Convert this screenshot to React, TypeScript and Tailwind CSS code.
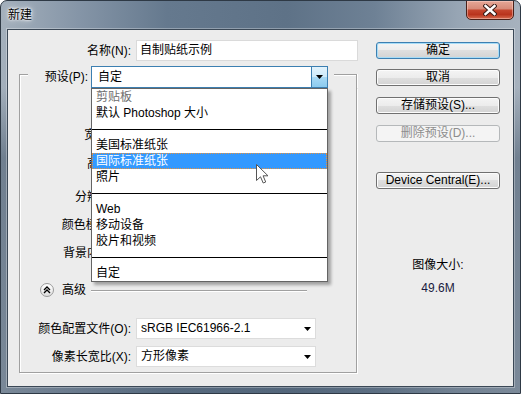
import React from 'react';

function Caret() {
  return (
    <svg width="7" height="4" viewBox="0 0 7 4" className="block">
      <path d="M0 0H7L3.5 4Z" fill="#000" />
    </svg>
  );
}

function Btn({ label, variant }: { label: string; variant?: 'default' | 'disabled' }) {
  if (variant === 'default') {
    return (
      <div className="h-[17px] w-[124px] rounded-[3px] border border-[#3c7fb1] bg-[linear-gradient(#f4f4f4_0%,#ececec_50%,#dfdfdf_50%,#d3d3d3_100%)] shadow-[inset_0_0_0_1px_#a6dcf7] text-center text-[12px] leading-[15px] text-black">
        {label}
      </div>
    );
  }
  if (variant === 'disabled') {
    return (
      <div className="h-[17px] w-[124px] rounded-[3px] border border-[#b5b8ba] bg-[#f4f4f4] text-center text-[12px] leading-[15px] text-[#8d8d8d]">
        {label}
      </div>
    );
  }
  return (
    <div className="h-[17px] w-[124px] rounded-[3px] border border-[#707070] bg-[linear-gradient(#f4f4f4_0%,#ececec_50%,#dfdfdf_50%,#d3d3d3_100%)] shadow-[inset_0_0_0_1px_#fcfcfc] text-center text-[12px] leading-[15px] text-black">
      {label}
    </div>
  );
}

function FlatSelect({ value, width }: { value: string; width: string }) {
  return (
    <div className={`${width} h-[21px] ml-[5px] border border-[#dcdcdc] bg-white flex items-center pl-[4px] pr-[4px]`}>
      <div className="flex-1 text-[12px] leading-[19px] text-black">{value}</div>
      <Caret />
    </div>
  );
}

function HiddenRow({ label, mt, gray, children }: { label: string; mt: string; gray?: boolean; children?: React.ReactNode }) {
  return (
    <div className={`${mt} h-[20px] flex items-center`}>
      <div className={`w-[111px] text-right text-[12px] leading-[16px] ${gray ? 'text-[#a3a3a3]' : 'text-black'}`}>{label}</div>
      {children}
    </div>
  );
}

type Item = { t?: string; sep?: boolean; gray?: boolean; hl?: boolean };
const items: Item[] = [
  { t: '剪贴板', gray: true },
  { t: '默认 Photoshop 大小' },
  { sep: true },
  { t: '美国标准纸张' },
  { t: '国际标准纸张', hl: true },
  { t: '照片' },
  { sep: true },
  { t: 'Web' },
  { t: '移动设备' },
  { t: '胶片和视频' },
  { sep: true },
  { t: '自定' },
];

export default function App() {
  return (
    <div className="w-[521px] h-[394px] [font-family:'Liberation_Sans','Noto_Sans_CJK_SC',sans-serif]">
      <div className="w-[521px] h-[394px] rounded-t-[7px] border border-[#2e3945] bg-[linear-gradient(180deg,rgba(70,88,108,0)_0%,rgba(70,88,108,0)_22%,rgba(70,88,108,0.55)_40%,rgba(70,88,108,0.45)_100%),linear-gradient(90deg,#a4b0bc_0%,#8595a7_15%,#65798e_32%,#5e7287_55%,#6e8195_72%,#97a5b4_88%,#a7b2be_100%)] flex flex-col overflow-hidden">
        {/* Title bar */}
        <div className="h-[28px] flex items-start justify-between">
          <div className="ml-[7px] mt-[6px] text-[12px] leading-[16px] text-black [text-shadow:0_0_6px_#fff,0_0_3px_#fff,0_0_2px_#fff]">新建</div>
          <div className="mr-[6px] -mt-px w-[48px] h-[20px] rounded-b-[5px] border border-[#4a2119] bg-[linear-gradient(#e6a797_0%,#d88b79_42%,#c4452d_52%,#b9341d_75%,#d66c50_100%)] shadow-[inset_0_0_0_1px_rgba(255,220,210,0.45)] flex items-center justify-center">
            <svg width="14" height="12" viewBox="0 0 14 12">
              <path d="M2.5 2L11.5 10M11.5 2L2.5 10" stroke="#3a1d18" strokeWidth="4.4" strokeLinecap="square" />
              <path d="M2.5 2L11.5 10M11.5 2L2.5 10" stroke="#fff" strokeWidth="2.4" strokeLinecap="square" />
            </svg>
          </div>
        </div>

        {/* Client area */}
        <div className="ml-[6px] w-[507px] h-[358px] border border-[#3b4856] bg-[#ececec] shadow-[0_0_0_1px_rgba(255,255,255,0.3)] flex">
          {/* Left column */}
          <div className="w-[352px] flex flex-col">
            <div className="mt-[10px] h-[21px] flex items-center">
              <div className="w-[123px] text-right text-[12px] leading-[16px] text-black">名称(N):</div>
              <div className="ml-[5px] w-[222px] h-[21px] border border-[#dadada] bg-white pl-[3px] text-[12px] leading-[19px] text-black">自制贴纸示例</div>
            </div>

            {/* Group box */}
            <div className="mt-[5px] ml-[11px] w-[338px] flex flex-col">
              <div className="h-[22px] flex">
                <div className="w-[9px] h-[14px] mt-[8px] border-l border-t border-[#a0a0a0] shadow-[inset_1px_1px_0_#fff]" />
                <div className="w-[63px] pr-[3px] text-right text-[12px] leading-[22px] text-black">预设(P):</div>
                <div className="relative w-[237px] h-[22px] border border-[#3c7fb1] bg-white flex">
                  <div className="flex-1 pl-[6px] text-[12px] leading-[20px] text-black">自定</div>
                  <div className="w-[16px] h-full border-l border-[#3c7fb1] bg-[linear-gradient(#e3f3fc_0%,#cdeafa_50%,#a9daf5_50%,#8ccbee_100%)] flex items-center justify-center">
                    <Caret />
                  </div>
                  {/* Dropdown list */}
                  <div className="absolute left-[-1px] top-[21px] z-10 w-[237px] border border-[#646464] bg-white shadow-[3px_3px_3px_rgba(0,0,0,0.32)]">
                    {items.map((it, i) =>
                      it.sep ? (
                        <div key={i} className="h-[16px] flex items-center">
                          <div className="w-full h-px bg-black" />
                        </div>
                      ) : it.hl ? (
                        <div key={i} className="h-[16px] border border-dotted border-[#e8913b] bg-[#3399ff] pl-[3px] text-[12px] leading-[14px] text-white">
                          {it.t}
                        </div>
                      ) : (
                        <div key={i} className={`h-[16px] pl-[4px] text-[12px] leading-[16px] ${it.gray ? 'text-[#6e6e6e]' : 'text-black'}`}>
                          {it.t}
                        </div>
                      )
                    )}
                    {/* Mouse cursor */}
                    <svg className="absolute left-[164px] top-[75px]" width="13" height="20" viewBox="0 0 13 20">
                      <path d="M0.5 0.5L0.5 16.5L4.5 12.8L7.2 19L9.7 18L7.1 11.8L12 11.8Z" fill="#fff" stroke="#555" strokeWidth="1" strokeLinejoin="round" />
                    </svg>
                  </div>
                </div>
                <div className="flex-1 ml-[6px] h-[14px] mt-[8px] border-t border-r border-[#a0a0a0] shadow-[inset_0_1px_0_#fff,1px_0_0_#fff]" />
              </div>

              <div className="h-[285px] border-l border-r border-b border-[#a0a0a0] shadow-[inset_1px_0_0_#fff,1px_1px_0_#fff] flex flex-col">
                <HiddenRow label="大小(I):" mt="mt-[12px]" gray>
                  <div className="ml-[5px] w-[180px] h-[20px] border border-[#dcdcdc] bg-[#f4f4f4]" />
                </HiddenRow>
                <HiddenRow label="宽度(W):" mt="mt-[5px]">
                  <div className="ml-[5px] w-[90px] h-[20px] border border-[#dcdcdc] bg-white" />
                </HiddenRow>
                <HiddenRow label="高度(H):" mt="mt-[9px]">
                  <div className="ml-[5px] w-[90px] h-[20px] border border-[#dcdcdc] bg-white" />
                </HiddenRow>
                <HiddenRow label="分辨率(R):" mt="mt-[13px]">
                  <div className="ml-[5px] w-[90px] h-[20px] border border-[#dcdcdc] bg-white" />
                </HiddenRow>
                <HiddenRow label="颜色模式(M):" mt="mt-[8px]">
                  <div className="ml-[5px] w-[90px] h-[20px] border border-[#dcdcdc] bg-white" />
                </HiddenRow>
                <HiddenRow label="背景内容(C):" mt="mt-[8px]">
                  <div className="ml-[5px] w-[180px] h-[20px] border border-[#dcdcdc] bg-white" />
                </HiddenRow>

                {/* Advanced */}
                <div className="mt-[17px] h-[20px] flex items-center">
                  <div className="ml-[20px] w-[14px] h-[14px] rounded-full border border-[#9a9a9a] bg-[linear-gradient(#ffffff_0%,#f1f1f1_50%,#dcdcdc_100%)] flex items-center justify-center">
                    <svg width="8" height="8" viewBox="0 0 8 8">
                      <path d="M1 4L4 1L7 4M1 7L4 4L7 7" fill="none" stroke="#000" strokeWidth="1.3" />
                    </svg>
                  </div>
                  <div className="ml-[8px] text-[12px] leading-[16px] text-black">高级</div>
                  <div className="ml-[5px] w-[216px] h-px bg-[#a0a0a0] shadow-[0_1px_0_#fff]" />
                </div>

                <div className="mt-[18px] h-[21px] flex items-center">
                  <div className="w-[111px] text-right text-[12px] leading-[16px] text-black">颜色配置文件(O):</div>
                  <FlatSelect value="sRGB IEC61966-2.1" width="w-[180px]" />
                </div>
                <div className="mt-[7px] h-[21px] flex items-center">
                  <div className="w-[111px] text-right text-[12px] leading-[16px] text-black">像素长宽比(X):</div>
                  <FlatSelect value="方形像素" width="w-[180px]" />
                </div>
              </div>
            </div>
          </div>

          {/* Right column */}
          <div className="ml-[16px] w-[124px] flex flex-col">
            <div className="mt-[12px]"><Btn label="确定" variant="default" /></div>
            <div className="mt-[10px]"><Btn label="取消" /></div>
            <div className="mt-[11px]"><Btn label="存储预设(S)..." /></div>
            <div className="mt-[11px]"><Btn label="删除预设(D)..." variant="disabled" /></div>
            <div className="mt-[30px]"><Btn label="Device Central(E)..." /></div>
            <div className="mt-[68px] text-center text-[12px] leading-[16px] text-black">图像大小:</div>
            <div className="mt-[7px] text-center text-[12px] leading-[16px] text-[#1a1a40]">49.6M</div>
          </div>
        </div>
      </div>
    </div>
  );
}
